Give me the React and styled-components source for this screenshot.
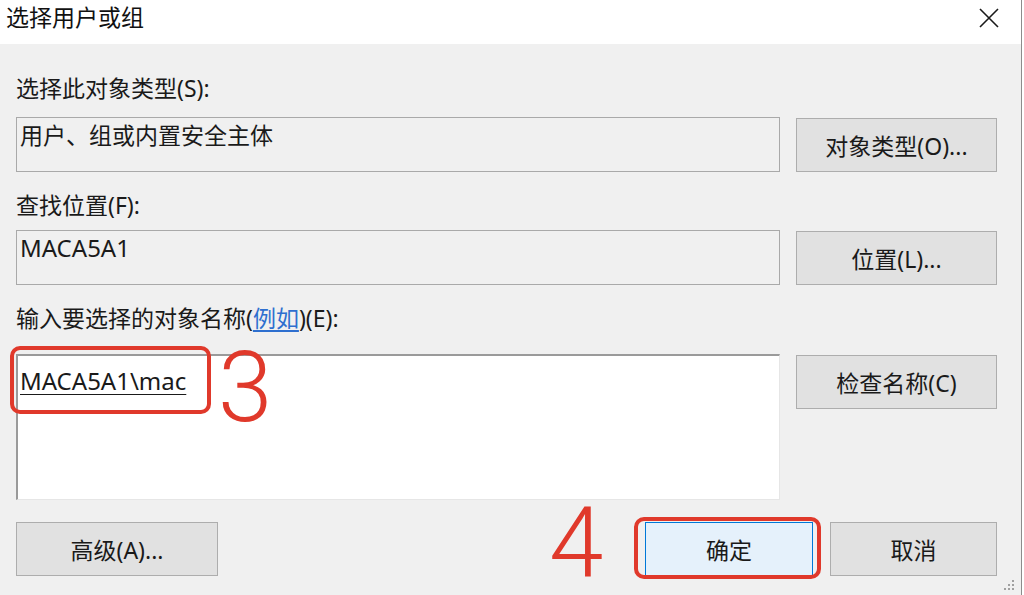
import React from 'react'
import styled, { createGlobalStyle } from 'styled-components'

const GlobalStyle = createGlobalStyle`
  html, body {
    margin: 0;
    padding: 0;
    background: #ffffff;
  }
  body {
    font-family: "Noto Sans", "Noto Sans CJK SC", sans-serif;
    color: #1a1a1a;
  }
`

function App() {
  return (
    <>
      <GlobalStyle />
      <Window>
        <TitleBar>
          <Title>选择用户或组</Title>
          <CloseButton aria-label="close">
            <svg width="20" height="20" viewBox="0 0 20 20">
              <path d="M1 1 L19 19 M19 1 L1 19" stroke="#1a1a1a" strokeWidth="1.6" fill="none" />
            </svg>
          </CloseButton>
        </TitleBar>

        <Body>
          <Label top={30}>选择此对象类型(S):</Label>
          <Row top={15}>
            <ReadBox>用户、组或内置安全主体</ReadBox>
            <Button>对象类型(O)...</Button>
          </Row>

          <Label top={19}>查找位置(F):</Label>
          <Row top={11}>
            <ReadBox latin>MACA5A1</ReadBox>
            <Button>位置(L)...</Button>
          </Row>

          <Label top={19}>
            输入要选择的对象名称(<LinkText>例如</LinkText>)(E):
          </Label>
          <Row top={22}>
            <NameArea>
              <NameText>MACA5A1\mac</NameText>
            </NameArea>
            <Button>检查名称(C)</Button>
          </Row>

          <Footer>
            <Button width={202}>高级(A)...</Button>
            <FooterGroup>
              <Button width={168} primary>确定</Button>
              <Button width={167}>取消</Button>
            </FooterGroup>
          </Footer>
        </Body>

        <Grip>
          <svg width="14" height="14" viewBox="0 0 14 14">
            {[[11, 2], [7, 6], [11, 6], [3, 10], [7, 10], [11, 10]].map(([x, y]) => (
              <rect key={x + '-' + y} x={x} y={y} width="2" height="2" fill="#a0a0a0" />
            ))}
          </svg>
        </Grip>

        <Marker left={10} top={346} w={201} h={68} />
        <StepNumber left={218} top={339}>3</StepNumber>
        <Marker left={634} top={517} w={187} h={62} />
        <StepNumber left={549} top={495}>4</StepNumber>
      </Window>
    </>
  )
}

const Window = styled.div`
  position: relative;
  width: 1021px;
  height: 595px;
  border-right: 1px solid #8c8c8c;
  background: #f0f0f0;
  overflow: hidden;
`

const TitleBar = styled.div`
  height: 44px;
  background: #ffffff;
  display: flex;
  align-items: center;
  justify-content: space-between;
  padding: 0 22px 0 6px;
  box-sizing: border-box;
`

const Title = styled.div`
  font-size: 23px;
  line-height: 30px;
  margin-top: -10px;
  color: #111;
`

const CloseButton = styled.div`
  display: flex;
  align-items: center;
  margin-top: -9px;
`

const Body = styled.div`
  padding: 0 24px 0 16px;
  display: flex;
  flex-direction: column;
`

const Label = styled.div`
  margin-top: ${p => p.top}px;
  font-size: 23px;
  line-height: 28px;
  height: 28px;
  color: #1a1a1a;
  white-space: nowrap;
`

const LinkText = styled.span`
  color: #2e6fcf;
  text-decoration: underline;
  text-underline-offset: 3px;
`

const Row = styled.div`
  margin-top: ${p => p.top}px;
  display: grid;
  grid-template-columns: 764px 201px;
  column-gap: 16px;
  align-items: start;
`

const ReadBox = styled.div`
  height: 55px;
  box-sizing: border-box;
  border: 1px solid #a9a9a9;
  background: #f0f0f0;
  padding: 2px 0 0 3px;
  font-size: ${p => (p.latin ? 24 : 23)}px;
  line-height: 30px;
  color: #1a1a1a;
`

const NameArea = styled.div`
  height: 146px;
  box-sizing: border-box;
  background: #ffffff;
  border-top: 2px solid #9a9a9a;
  border-left: 2px solid #9a9a9a;
  border-right: 1px solid #e6e6e6;
  border-bottom: 1px solid #e6e6e6;
  padding: 10px 0 0 2px;
`

const NameText = styled.span`
  font-size: 24px;
  line-height: 30px;
  color: #1a1a1a;
  text-decoration: underline;
  text-underline-offset: 4px;
  text-decoration-thickness: 1px;
`

const Button = styled.div`
  width: ${p => (p.width ? p.width + 'px' : 'auto')};
  height: 54px;
  box-sizing: border-box;
  display: flex;
  align-items: center;
  justify-content: center;
  font-size: 23px;
  color: #1a1a1a;
  background: ${p => (p.primary ? '#e5f1fb' : '#e1e1e1')};
  border: 1px solid ${p => (p.primary ? '#0078d7' : '#adadad')};
  margin-top: 1px;
`

const Footer = styled.div`
  margin-top: 21px;
  display: flex;
  justify-content: space-between;
  align-items: center;
`

const FooterGroup = styled.div`
  display: flex;
  gap: 17px;
`

const Grip = styled.div`
  position: absolute;
  right: 6px;
  bottom: 3px;
  display: flex;
`

const Marker = styled.div`
  position: absolute;
  left: ${p => p.left}px;
  top: ${p => p.top}px;
  width: ${p => p.w}px;
  height: ${p => p.h}px;
  box-sizing: border-box;
  border: 4px solid #e0392b;
  border-radius: 10px;
  pointer-events: none;
`

const StepNumber = styled.div`
  position: absolute;
  left: ${p => p.left}px;
  top: ${p => p.top}px;
  font-family: Roboto, "Liberation Sans", sans-serif;
  font-weight: 300;
  font-size: 98px;
  line-height: 98px;
  color: #e0392b;
  pointer-events: none;
`

export default App
